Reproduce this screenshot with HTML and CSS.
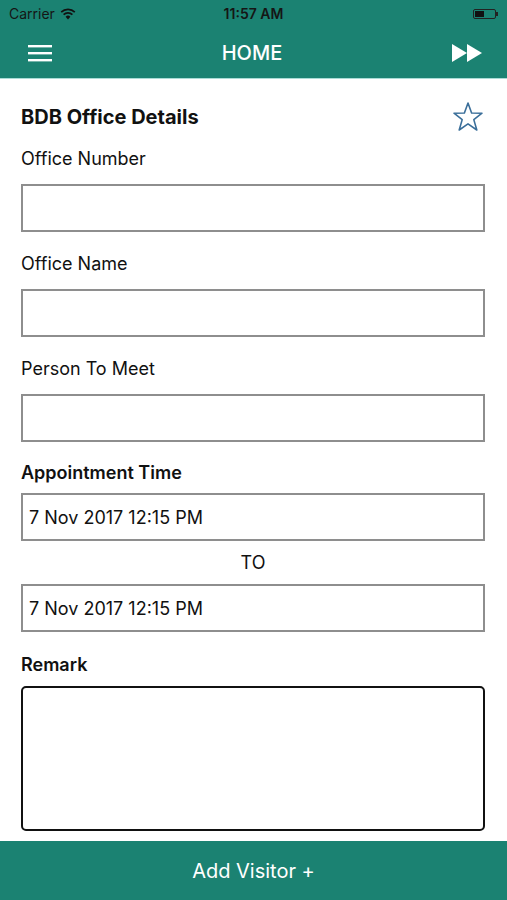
FILE: index.html
```html
<!DOCTYPE html>
<html lang="en">
<head>
    <meta charset="UTF-8">
    <meta name="viewport" content="width=device-width, initial-scale=1.0">
    <title>Home</title>
    <link rel="stylesheet" href="styles.css">
</head>
<body>
    <div class="app">
        <div class="top-bar">
            <div class="status-bar">
                <div class="carrier">
                    Carrier
                    <svg class="wifi" width="16" height="12" viewBox="0 0 16 12">
                        <path d="M8 11.5 L5.6 8.8 A3.4 3.4 0 0 1 10.4 8.8 Z" fill="#111"/>
                        <path d="M3.6 6.6 A6.3 6.3 0 0 1 12.4 6.6" stroke="#111" stroke-width="1.7" fill="none"/>
                        <path d="M1.2 4.1 A9.6 9.6 0 0 1 14.8 4.1" stroke="#111" stroke-width="1.7" fill="none"/>
                    </svg>
                </div>
                <div class="clock">11:57 AM</div>
                <div class="battery">
                    <div class="battery-body"><div class="battery-level"></div></div>
                    <div class="battery-tip"></div>
                </div>
            </div>
            <div class="nav-bar">
                <svg class="menu-icon" width="24" height="18" viewBox="0 0 24 18">
                    <rect x="0" y="1" width="24" height="2.4" fill="#fff"/>
                    <rect x="0" y="8" width="24" height="2.4" fill="#fff"/>
                    <rect x="0" y="15" width="24" height="2.4" fill="#fff"/>
                </svg>
                <h1 class="nav-title">HOME</h1>
                <svg class="forward-icon" width="30" height="18" viewBox="0 0 30 18">
                    <path d="M0 0 L15 9 L0 18 Z" fill="#fff"/>
                    <path d="M15 0 L30 9 L15 18 Z" fill="#fff"/>
                </svg>
            </div>
        </div>

        <div class="form">
            <div class="form-head">
                <h2 class="form-title">BDB Office Details</h2>
                <svg class="star" width="32" height="32" viewBox="0 0 32 32">
                    <path d="M16 2 L19.6 12 L30 12.2 L21.8 18.6 L24.8 29 L16 22.9 L7.2 29 L10.2 18.6 L2 12.2 L12.4 12 Z" fill="none" stroke="#3b6f9a" stroke-width="1.6" stroke-linejoin="round"/>
                </svg>
            </div>

            <label class="field-label first">Office Number</label>
            <div class="text-box"></div>

            <label class="field-label">Office Name</label>
            <div class="text-box"></div>

            <label class="field-label">Person To Meet</label>
            <div class="text-box"></div>

            <label class="field-label bold appt-label">Appointment Time</label>
            <div class="text-box date">7 Nov 2017 12:15 PM</div>
            <div class="to">TO</div>
            <div class="text-box date">7 Nov 2017 12:15 PM</div>

            <label class="field-label bold remark-label">Remark</label>
            <div class="remark-box"></div>
        </div>

        <div class="add-button">Add Visitor +</div>
    </div>
</body>
</html>
```

FILE: styles.css
```css
body {
    margin: 0;
    font-family: Inter, "Liberation Sans", sans-serif;
    background-color: #ffffff;
    color: #111111;
}

.app {
    width: 507px;
    height: 900px;
    display: flex;
    flex-direction: column;
}

.top-bar {
    background-color: #1b8272;
    height: 78px;
    border-bottom: 1px solid #a9dcd6;
}

.status-bar {
    height: 27px;
    display: flex;
    align-items: center;
    justify-content: space-between;
    padding: 0 9px;
    font-size: 14px;
    color: #151515;
}

.carrier {
    display: flex;
    align-items: center;
    gap: 5px;
    width: 110px;
}

.clock {
    font-weight: 600;
}

.battery {
    width: 110px;
    display: flex;
    justify-content: flex-end;
    align-items: center;
}

.battery-body {
    width: 23px;
    height: 10px;
    border: 1px solid #222;
    border-radius: 2px;
    padding: 1px;
    box-sizing: border-box;
}

.battery-level {
    width: 9px;
    height: 100%;
    background-color: #111;
}

.battery-tip {
    width: 2px;
    height: 4px;
    background-color: #222;
}

.nav-bar {
    height: 51px;
    display: flex;
    align-items: center;
    justify-content: space-between;
    padding: 0 25px 0 28px;
}

.nav-title {
    margin: 0;
    font-size: 20px;
    font-weight: 500;
    color: #ffffff;
}

.form {
    flex: 1;
    padding: 0 22px 0 21px;
    display: flex;
    flex-direction: column;
}

.form-head {
    display: flex;
    justify-content: space-between;
    align-items: center;
    margin-top: 21px;
    height: 34px;
}

.form-title {
    margin: 0;
    font-size: 20px;
    font-weight: 700;
}

.star {
    margin-right: 1px;
}

.field-label {
    font-size: 18px;
    line-height: 24px;
    margin-top: 20px;
}

.field-label.first {
    margin-top: 13px;
}

.field-label.bold {
    font-weight: 600;
}

.field-label.appt-label {
    margin-top: 19px;
}

.text-box {
    height: 48px;
    margin-top: 13px;
    border: 2px solid #8e8e8e;
    box-sizing: border-box;
    display: flex;
    align-items: center;
    padding-left: 6px;
    font-size: 18px;
}

.text-box.date {
    margin-top: 8px;
}

.to {
    text-align: center;
    font-size: 18px;
    line-height: 24px;
    margin-top: 10px;
}

.to + .text-box.date {
    margin-top: 9px;
}

.remark-label {
    margin-top: 21px;
}

.remark-box {
    height: 145px;
    margin-top: 9px;
    border: 2px solid #111;
    border-radius: 5px;
    box-sizing: border-box;
}

.add-button {
    height: 59px;
    background-color: #1b8272;
    color: #ffffff;
    font-size: 20px;
    display: flex;
    align-items: center;
    justify-content: center;
}
```
